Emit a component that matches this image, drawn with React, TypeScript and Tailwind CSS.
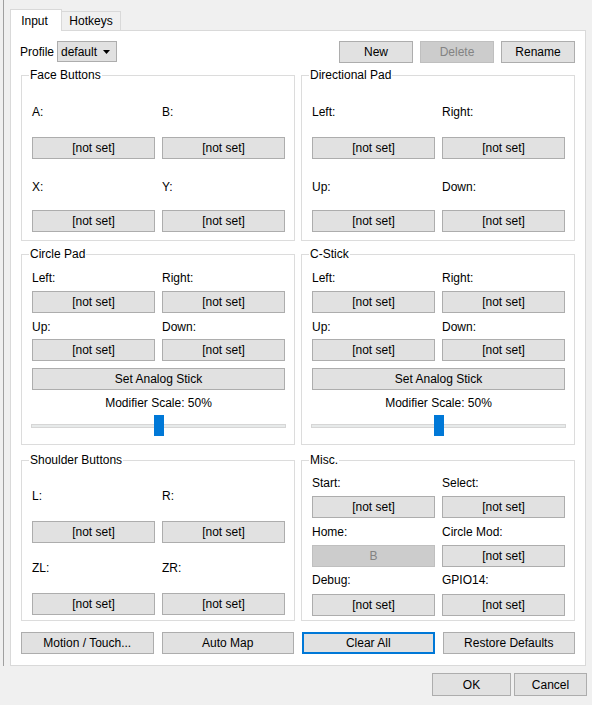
import clsx from "clsx";
import { ReactNode } from "react";

function Btn({
  children,
  className,
  disabled,
}: {
  children: ReactNode;
  className?: string;
  disabled?: boolean;
}) {
  return (
    <button
      type="button"
      className={clsx(
        "h-[22px] flex items-center justify-center leading-[14px]",
        disabled
          ? "bg-[#cccccc] border border-[#bfbfbf] text-[#838383]"
          : "bg-[#e1e1e1] border border-[#adadad] text-black",
        className
      )}
    >
      {children}
    </button>
  );
}

function Group({
  title,
  className,
  children,
}: {
  title: string;
  className?: string;
  children: ReactNode;
}) {
  return (
    <div className={clsx("relative border border-[#dcdcdc] flex flex-col pl-[10px] pr-[9px]", className)}>
      <span className="absolute -top-[8px] left-[7px] bg-white px-[1px] leading-[14px]">{title}</span>
      {children}
    </div>
  );
}

function Labels({ a, b, className }: { a: string; b: string; className?: string }) {
  return (
    <div className={clsx("grid grid-cols-2 gap-x-[7px] h-[14px] leading-[14px]", className)}>
      <span>{a}</span>
      <span>{b}</span>
    </div>
  );
}

function Keys({ className, left = "[not set]", leftDisabled }: { className?: string; left?: string; leftDisabled?: boolean }) {
  return (
    <div className={clsx("grid grid-cols-2 gap-x-[7px]", className)}>
      <Btn disabled={leftDisabled}>{left}</Btn>
      <Btn>[not set]</Btn>
    </div>
  );
}

function FourWay({ title, a, b, c, d }: { title: string; a: string; b: string; c: string; d: string }) {
  return (
    <Group title={title} className="h-[166px]">
      <Labels a={a} b={b} className="mt-[29px]" />
      <Keys className="mt-[18px]" />
      <Labels a={c} b={d} className="mt-[21px]" />
      <Keys className="mt-[16px]" />
    </Group>
  );
}

function Stick({ title }: { title: string }) {
  return (
    <Group title={title} className="h-[191px]">
      <Labels a="Left:" b="Right:" className="mt-[16px]" />
      <Keys className="mt-[6px]" />
      <Labels a="Up:" b="Down:" className="mt-[7px]" />
      <Keys className="mt-[5px]" />
      <Btn className="mt-[7px] w-full">Set Analog Stick</Btn>
      <div className="mt-[6px] h-[14px] leading-[14px] text-center">Modifier Scale: 50%</div>
      <div className="relative mt-[5px] h-[21px] -ml-[1px] -mr-[1px] flex items-center">
        <div className="w-full h-[4px] bg-[#e7eaea] border border-[#d6d6d6]" />
        <div className="absolute left-[calc(50%-5px)] top-0 w-[10px] h-[21px] bg-[#0078d7]" />
      </div>
    </Group>
  );
}

export default function App() {
  return (
    <div className="w-[592px] h-[705px] bg-[#f0f0f0] flex flex-col text-[12px] leading-[14px] text-black font-['Liberation_Sans',sans-serif]">
      <div className="flex h-[666px]">
        <div className="w-[3px]" />
        <div className="w-[1px] h-[666px] bg-[#a0a0a0]" />
        <div className="w-[6px]" />
        <div className="w-[576px] flex flex-col pt-[9px]">
          <div className="flex items-end h-[21px]">
            <div className="relative z-10 -mb-[1px] h-[22px] w-[52px] bg-white border-l border-t border-r border-[#d9d9d9] flex items-center justify-center pr-[3px]">
              Input
            </div>
            <div className="h-[19px] w-[59px] border-t border-r border-[#d9d9d9] flex items-center justify-center">
              Hotkeys
            </div>
          </div>
          <div className="flex-1 border border-[#d9d9d9] bg-white flex flex-col px-[10px] pt-[10px]">
            <div className="flex items-center h-[21px]">
              <span className="-ml-[1px] w-[37px]">Profile</span>
              <div className="w-[60px] h-[21px] bg-[#e1e1e1] border border-[#adadad] flex items-center pl-[3px] pr-[6px]">
                <span className="flex-1">default</span>
                <svg width="7" height="4" viewBox="0 0 7 4">
                  <path d="M0 0h7L3.5 4z" fill="#000" />
                </svg>
              </div>
              <div className="ml-auto flex gap-x-[7px]">
                <Btn className="w-[74px] h-[21px]">New</Btn>
                <Btn disabled className="w-[74px] h-[21px]">Delete</Btn>
                <Btn className="w-[74px] h-[21px]">Rename</Btn>
              </div>
            </div>

            <div className="grid grid-cols-2 gap-x-[6px] mt-[13px]">
              <FourWay title="Face Buttons" a="A:" b="B:" c="X:" d="Y:" />
              <FourWay title="Directional Pad" a="Left:" b="Right:" c="Up:" d="Down:" />
            </div>

            <div className="grid grid-cols-2 gap-x-[6px] mt-[13px]">
              <Stick title="Circle Pad" />
              <Stick title="C-Stick" />
            </div>

            <div className="grid grid-cols-2 gap-x-[6px] mt-[15px]">
              <Group title="Shoulder Buttons" className="h-[161px]">
                <Labels a="L:" b="R:" className="mt-[28px]" />
                <Keys className="mt-[18px]" />
                <Labels a="ZL:" b="ZR:" className="mt-[18px]" />
                <Keys className="mt-[18px]" />
              </Group>
              <Group title="Misc." className="h-[161px]">
                <Labels a="Start:" b="Select:" className="mt-[15px]" />
                <Keys className="mt-[6px]" />
                <Labels a="Home:" b="Circle Mod:" className="mt-[7px]" />
                <Keys className="mt-[6px]" left="B" leftDisabled />
                <Labels a="Debug:" b="GPIO14:" className="mt-[6px]" />
                <Keys className="mt-[7px]" />
              </Group>
            </div>

            <div className="grid grid-cols-4 gap-x-[8px] mt-[11px]">
              <Btn>Motion / Touch...</Btn>
              <Btn>Auto Map</Btn>
              <Btn className="border-2 !border-[#0078d7]">Clear All</Btn>
              <Btn>Restore Defaults</Btn>
            </div>
          </div>
        </div>
      </div>
      <div className="flex justify-end gap-x-[3px] pt-[7px] pr-[5px]">
        <Btn className="w-[79px] h-[23px]">OK</Btn>
        <Btn className="w-[73px] h-[23px]">Cancel</Btn>
      </div>
    </div>
  );
}
